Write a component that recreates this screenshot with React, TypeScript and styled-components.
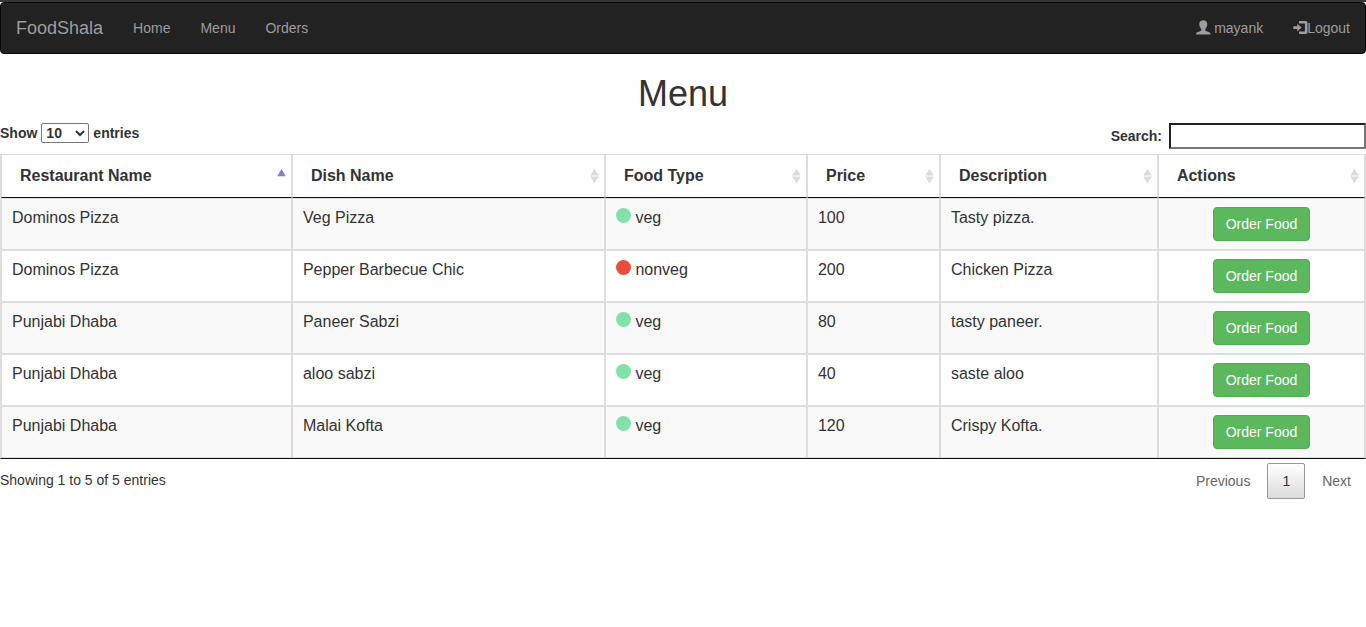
import React, { useState } from "react";
import styled, { createGlobalStyle } from "styled-components";

const GlobalStyle = createGlobalStyle`
  *, *::before, *::after { box-sizing: border-box; }
  body {
    margin: 0;
    background: #fff;
    color: #333;
    font: 14px/20px "Liberation Sans", Arial, sans-serif;
  }
  input, select, button { font: inherit; color: inherit; }
`;

const Page = styled.div`
  border-top: 2px solid #35363a;
`;

const Navbar = styled.nav`
  display: flex;
  justify-content: space-between;
  background: #222;
  border: 1px solid #080808;
  border-radius: 4px;
`;

const NavGroup = styled.div`
  display: flex;
`;

const NavLink = styled.a<{ $brand?: boolean }>`
  display: flex;
  align-items: center;
  padding: 15px;
  line-height: 20px;
  font-size: ${(p) => (p.$brand ? "18px" : "14px")};
  color: #9d9d9d;
  text-decoration: none;
  &:hover { color: #fff; }
`;

const NavIcon = styled.svg<{ $gap?: boolean }>`
  width: 14px;
  height: 14px;
  margin-right: ${(p) => (p.$gap ? "4px" : "0")};
  fill: currentColor;
  overflow: visible;
`;

const Title = styled.h1`
  margin: 20px 0 10px;
  font-size: 36px;
  line-height: 39px;
  font-weight: 400;
  text-align: center;
`;

const Controls = styled.div`
  display: flex;
  justify-content: space-between;
  align-items: flex-start;
  margin-bottom: 5px;
`;

const ControlLabel = styled.label<{ $gap: number }>`
  display: flex;
  align-items: center;
  gap: ${(p) => p.$gap}px;
  font-weight: 700;
`;

const LengthSelect = styled.select`
  width: 48px;
  height: 20px;
  padding: 0;
  border: 1px solid #767676;
  border-radius: 2px;
  background: #fff;
`;

const SearchInput = styled.input`
  width: 197px;
  height: 26px;
  padding: 1px 2px;
  border: 2px inset #767676;
  background: #fff;
  font-weight: 400;
`;

const Table = styled.table`
  width: 100%;
  table-layout: fixed;
  border-collapse: separate;
  border-spacing: 0;
  border: 1px solid #ddd;
  border-bottom-color: #111;
  font-size: 16px;
  line-height: 22px;
`;

const Col = styled.col<{ $share: number }>`
  width: ${(p) => p.$share}%;
`;

const HeadCell = styled.th`
  padding: 0;
  border: 1px solid #ddd;
  border-top: 0;
  border-bottom-color: #111;
  text-align: left;
`;

const SortButton = styled.button`
  display: flex;
  justify-content: space-between;
  align-items: center;
  width: 100%;
  padding: 10px 5px 10px 18px;
  border: 0;
  background: none;
  font-weight: 700;
  text-align: left;
  cursor: pointer;
`;

const SortIcon = styled.svg`
  width: 9px;
  height: 16px;
`;

const Row = styled.tr`
  &:nth-child(odd) { background: #f9f9f9; }
`;

const Cell = styled.td<{ $center?: boolean }>`
  padding: 8px 10px;
  border: 1px solid #ddd;
  vertical-align: top;
  text-align: ${(p) => (p.$center ? "center" : "left")};
`;

const Dot = styled.span<{ $veg: boolean }>`
  display: inline-block;
  width: 15px;
  height: 15px;
  border-radius: 50%;
  background: ${(p) => (p.$veg ? "#82e0aa" : "#e74c3c")};
`;

const OrderButton = styled.button`
  display: inline-block;
  padding: 6px 12px;
  border: 1px solid #4cae4c;
  border-radius: 4px;
  background: #5cb85c;
  color: #fff;
  font-size: 14px;
  line-height: 20px;
  vertical-align: top;
  white-space: nowrap;
  cursor: pointer;
`;

const Footer = styled.footer`
  display: flex;
  justify-content: space-between;
  align-items: flex-start;
  padding-top: 4px;
`;

const Info = styled.div`
  padding-top: 7px;
`;

const Pager = styled.div`
  display: flex;
  gap: 2px;
`;

const PageButton = styled.button<{ $current?: boolean }>`
  padding: 7px 14px;
  border: 1px solid ${(p) => (p.$current ? "#979797" : "transparent")};
  border-radius: 2px;
  background: ${(p) => (p.$current ? "linear-gradient(#fff, #dcdcdc)" : "none")};
  color: ${(p) => (p.$current ? "#333" : "#666")};
`;

const columns = [
  { name: "Restaurant Name", share: 21.33 },
  { name: "Dish Name", share: 22.95 },
  { name: "Food Type", share: 14.81 },
  { name: "Price", share: 9.75 },
  { name: "Description", share: 15.98 },
  { name: "Actions", share: 15.18 },
];

const dishes = [
  { restaurant: "Dominos Pizza", dish: "Veg Pizza", type: "veg", price: 100, about: "Tasty pizza." },
  { restaurant: "Dominos Pizza", dish: "Pepper Barbecue Chic", type: "nonveg", price: 200, about: "Chicken Pizza" },
  { restaurant: "Punjabi Dhaba", dish: "Paneer Sabzi", type: "veg", price: 80, about: "tasty paneer." },
  { restaurant: "Punjabi Dhaba", dish: "aloo sabzi", type: "veg", price: 40, about: "saste aloo" },
  { restaurant: "Punjabi Dhaba", dish: "Malai Kofta", type: "veg", price: 120, about: "Crispy Kofta." },
];

function SortMark({ active }: { active: boolean }) {
  return (
    <SortIcon viewBox="0 0 9 16" aria-hidden="true">
      {active ? (
        <path d="M4.5 1 8.800 8.200H.2z" fill="#7c7fe0" />
      ) : (
        <path d="M4.5 .8 8.800 7.600H.2zM.2 8.600h8.600L4.500 15.600z" fill="#dcdcdc" />
      )}
    </SortIcon>
  );
}

export default function App() {
  const [query, setQuery] = useState("");
  return (
    <Page>
      <GlobalStyle />
      <Navbar>
        <NavGroup>
          <NavLink href="#" $brand>FoodShala</NavLink>
          <NavLink href="#home">Home</NavLink>
          <NavLink href="#menu">Menu</NavLink>
          <NavLink href="#orders">Orders</NavLink>
        </NavGroup>
        <NavGroup>
          <NavLink href="#profile">
            <NavIcon $gap viewBox="0 0 14 14" aria-hidden="true">
              <path d="M7.300-.8C4.900-.8 3.300.7 3.300 3c0 2 .8 3.800 2 4.900v1c0 .7-.5 1-1.300 1.300L1.300 11.200C.6 11.500.2 11.800.2 12.500v.9h14.200v-.9c0-.7-.4-1-1.100-1.300l-2.700-1c-.8-.3-1.300-.6-1.300-1.300v-1c1.200-1.100 2-2.900 2-4.900C11.300.7 9.700-.8 7.300-.8z" />
            </NavIcon>
            mayank
          </NavLink>
          <NavLink href="#logout">
            <NavIcon viewBox="0 0 14 14" aria-hidden="true">
              <path d="M6 0h6.500C13.800 0 14.500.7 14.500 2v9c0 1.300-.7 2-2 2H6v-2.400h5.900V2.400H6zM.3 5.300h3.900V2.700l4.500 3.900-4.500 3.900V7.900H.3z" />
            </NavIcon>
            Logout
          </NavLink>
        </NavGroup>
      </Navbar>
      <main>
        <Title>Menu</Title>
        <Controls>
          <ControlLabel $gap={4}>
            Show
            <LengthSelect defaultValue="10">
              <option>10</option>
              <option>25</option>
              <option>50</option>
              <option>100</option>
            </LengthSelect>
            entries
          </ControlLabel>
          <ControlLabel $gap={7}>
            Search:
            <SearchInput type="search" value={query} onChange={(e) => setQuery(e.target.value)} />
          </ControlLabel>
        </Controls>
        <Table>
          <colgroup>
            {columns.map((c) => <Col key={c.name} $share={c.share} />)}
          </colgroup>
          <thead>
            <tr>
              {columns.map((c, i) => (
                <HeadCell key={c.name} scope="col">
                  <SortButton type="button">
                    {c.name}
                    <SortMark active={i === 0} />
                  </SortButton>
                </HeadCell>
              ))}
            </tr>
          </thead>
          <tbody>
            {dishes.map((d) => (
              <Row key={d.dish}>
                <Cell>{d.restaurant}</Cell>
                <Cell>{d.dish}</Cell>
                <Cell><Dot $veg={d.type === "veg"} /> {d.type}</Cell>
                <Cell>{d.price}</Cell>
                <Cell>{d.about}</Cell>
                <Cell $center><OrderButton type="button">Order Food</OrderButton></Cell>
              </Row>
            ))}
          </tbody>
        </Table>
        <Footer>
          <Info>Showing 1 to 5 of 5 entries</Info>
          <Pager>
            <PageButton type="button">Previous</PageButton>
            <PageButton type="button" $current>1</PageButton>
            <PageButton type="button">Next</PageButton>
          </Pager>
        </Footer>
      </main>
    </Page>
  );
}
